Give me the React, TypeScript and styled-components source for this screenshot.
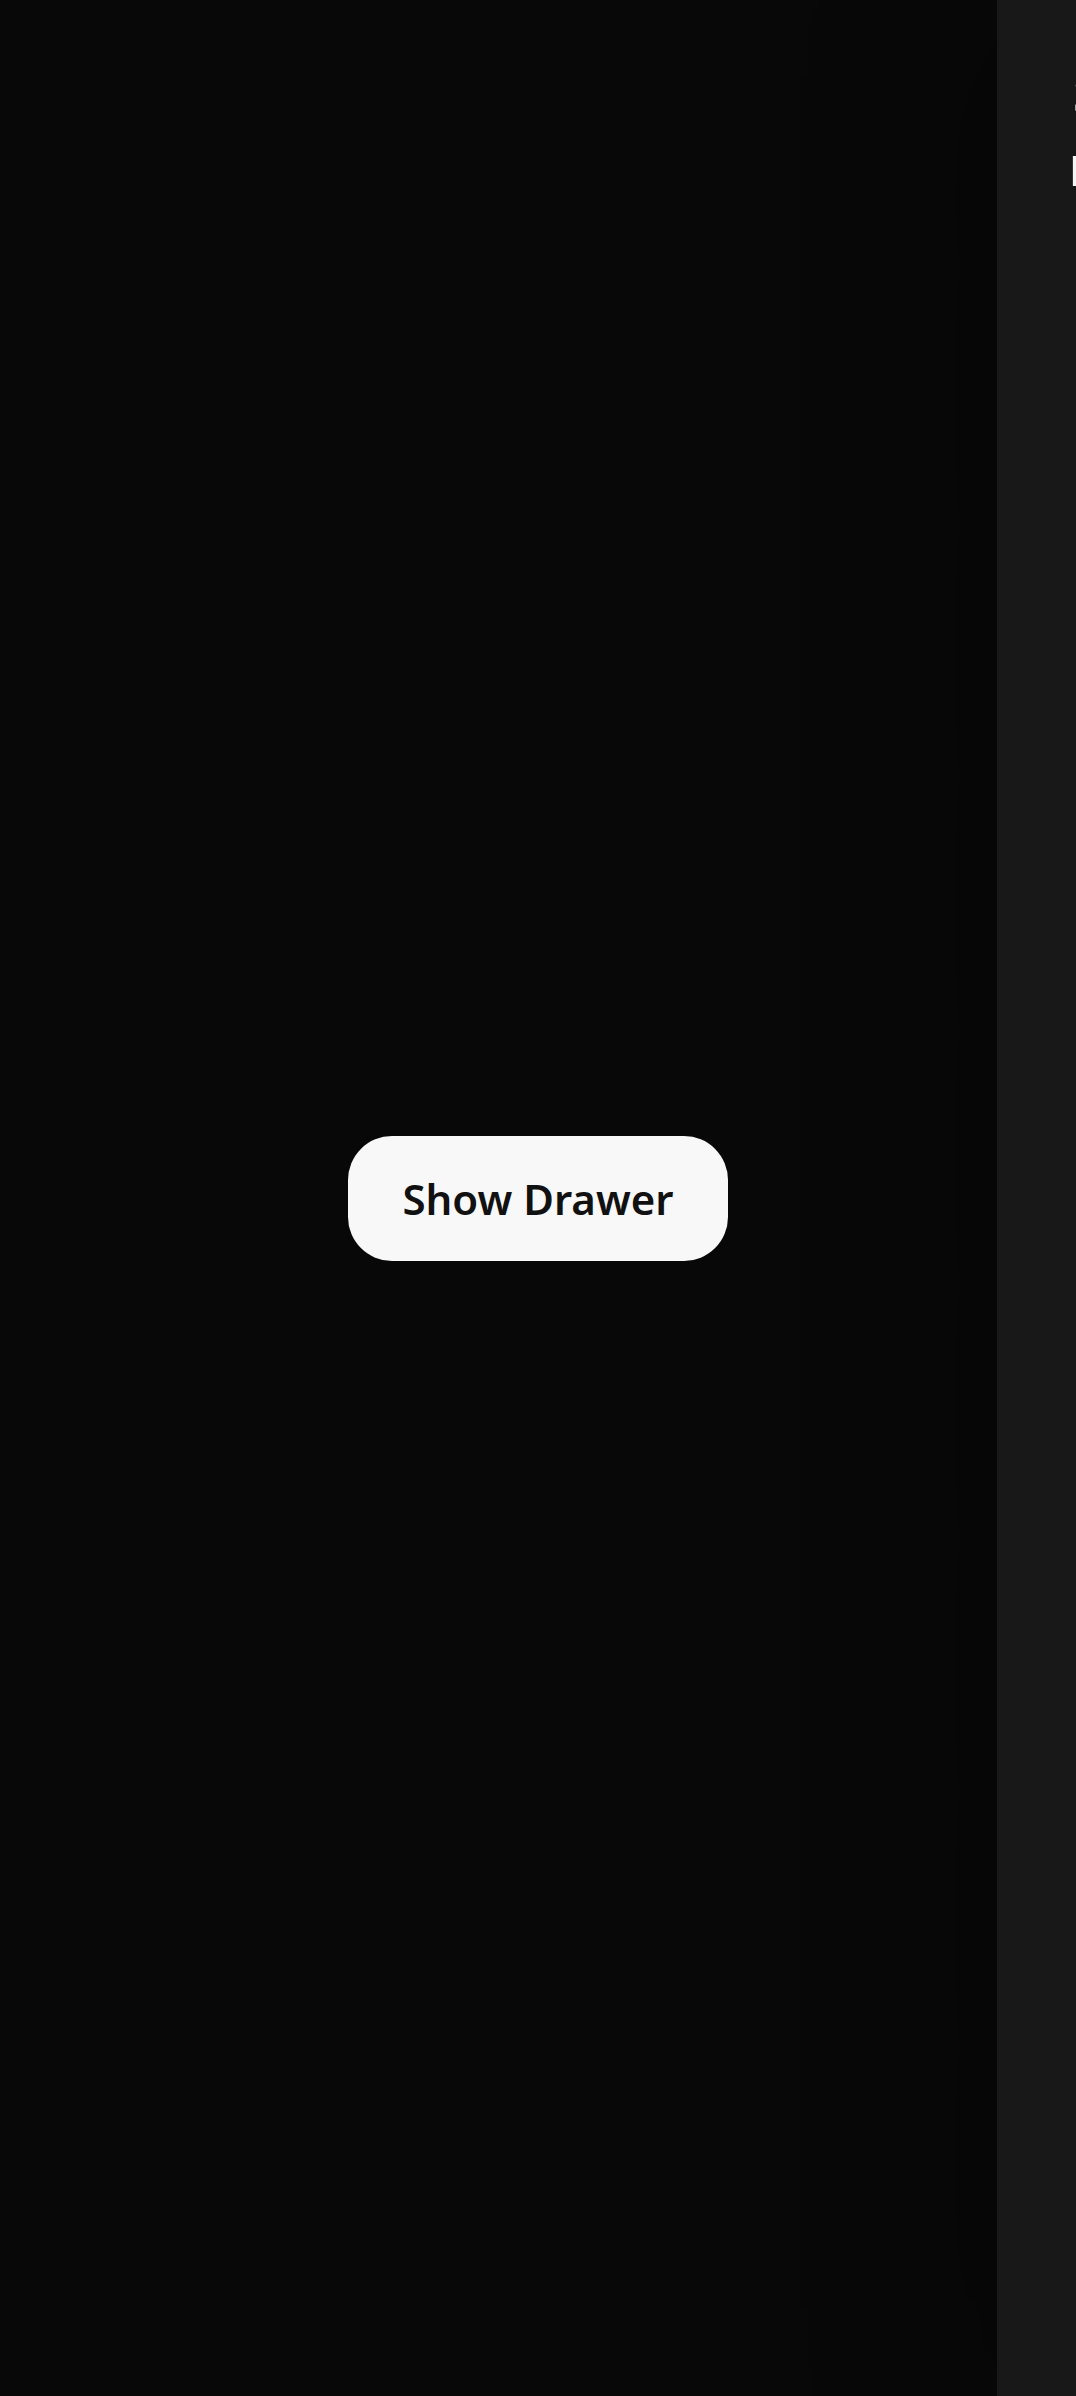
import { useState } from 'react'
import styled, { createGlobalStyle } from 'styled-components'

const GlobalStyle = createGlobalStyle`
	html, body {
		margin: 0;
		padding: 0;
		background-color: #080808;
		font-family: 'Noto Sans', 'Open Sans', sans-serif;
	}
	#root {
		min-height: 100vh;
	}
`

const Page = styled.main`
	height: 100vh;
	display: grid;
	place-items: center;
	background-color: #080808;
`
const ShowButton = styled.button`
	width: 380px;
	height: 125px;
	border: none;
	border-radius: 44px;
	background-color: #f8f8f8;
	color: #111111;
	font-family: 'Noto Sans', sans-serif;
	font-size: 42px;
	font-weight: 600;
	cursor: pointer;
`
const Panel = styled.aside`
	position: fixed;
	top: 0;
	bottom: 0;
	left: 997px;
	width: 420px;
	background-color: #181818;
	box-shadow: -30px 0 160px rgba(0, 0, 0, 0.3);
	padding: 0 0 0 76px;
	box-sizing: border-box;
	display: flex;
	flex-direction: column;
	overflow: hidden;
`
const Title = styled.h2`
	margin: 63px 0 0;
	font-size: 50px;
	line-height: 1.2;
	font-weight: 600;
	color: #f5f5f5;
	white-space: nowrap;
`
const Subtitle = styled.p`
	margin: 22px 0 0 -4px;
	font-size: 42px;
	line-height: 1.2;
	font-weight: 500;
	color: #f5f5f5;
	white-space: nowrap;
`

export default function App() {
	const [open, setOpen] = useState(true)
	return (
		<>
			<GlobalStyle />
			<Page>
				<ShowButton onClick={() => setOpen(true)}>Show Drawer</ShowButton>
			</Page>
			{open && (
				<Panel onClick={() => setOpen(false)}>
					<Title>Settings</Title>
					<Subtitle>Profile</Subtitle>
				</Panel>
			)}
		</>
	)
}
